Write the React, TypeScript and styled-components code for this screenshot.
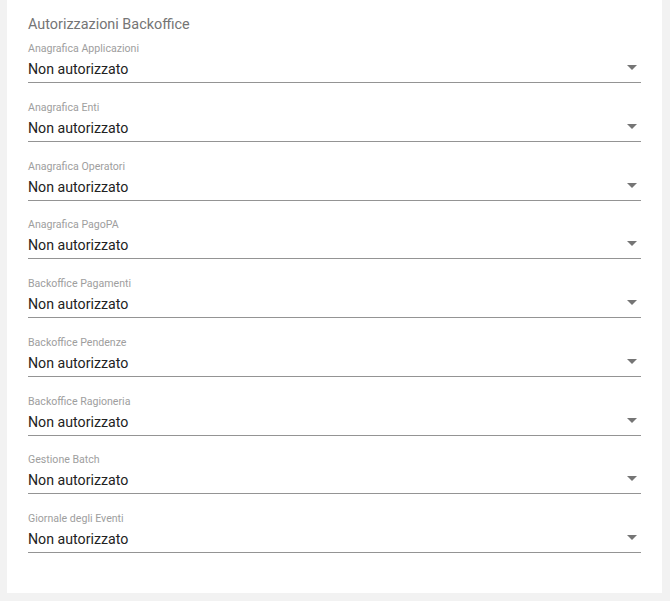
import React from 'react'
import styled, { createGlobalStyle } from 'styled-components'

const GlobalStyle = createGlobalStyle`
  html, body {
    margin: 0;
    padding: 0;
    background: #f2f2f2;
    font-family: Roboto, "Liberation Sans", Arial, sans-serif;
  }
`

const Panel = styled.section`
  margin: 0 8px 0 7px;
  background: #fff;
  padding: 15px 21px 40px 21px;
  box-sizing: border-box;
  width: 655px;
`

const Title = styled.h2`
  margin: 0;
  font-size: 14.4px;
  line-height: 20px;
  font-weight: 400;
  color: #757575;
`

const FieldList = styled.div`
  display: flex;
  flex-direction: column;
  gap: 18.75px;
  margin-top: 8px;
`

const Field = styled.div`
  display: flex;
  flex-direction: column;
`

const Label = styled.label`
  font-size: 10.6px;
  line-height: 12px;
  color: #9e9e9e;
`

const Select = styled.div`
  display: flex;
  align-items: center;
  justify-content: space-between;
  margin-top: 5px;
  padding-bottom: 3px;
  border-bottom: 1px solid #949494;
  cursor: pointer;
`

const Value = styled.span`
  font-size: 14.2px;
  line-height: 19px;
  color: #222;
`

const Arrow = styled.svg`
  width: 10px;
  height: 5px;
  margin-right: 4px;
  margin-bottom: 4px;
  fill: #757575;
`

const fields = [
  'Anagrafica Applicazioni',
  'Anagrafica Enti',
  'Anagrafica Operatori',
  'Anagrafica PagoPA',
  'Backoffice Pagamenti',
  'Backoffice Pendenze',
  'Backoffice Ragioneria',
  'Gestione Batch',
  'Giornale degli Eventi',
]

const App = () => {
  return (
    <>
      <GlobalStyle />
      <Panel>
        <Title>Autorizzazioni Backoffice</Title>
        <FieldList>
          {fields.map((name) => (
            <Field key={name}>
              <Label>{name}</Label>
              <Select>
                <Value>Non autorizzato</Value>
                <Arrow viewBox="0 0 10 5">
                  <path d="M0 0l5 5 5-5z" />
                </Arrow>
              </Select>
            </Field>
          ))}
        </FieldList>
      </Panel>
    </>
  )
}

export default App
